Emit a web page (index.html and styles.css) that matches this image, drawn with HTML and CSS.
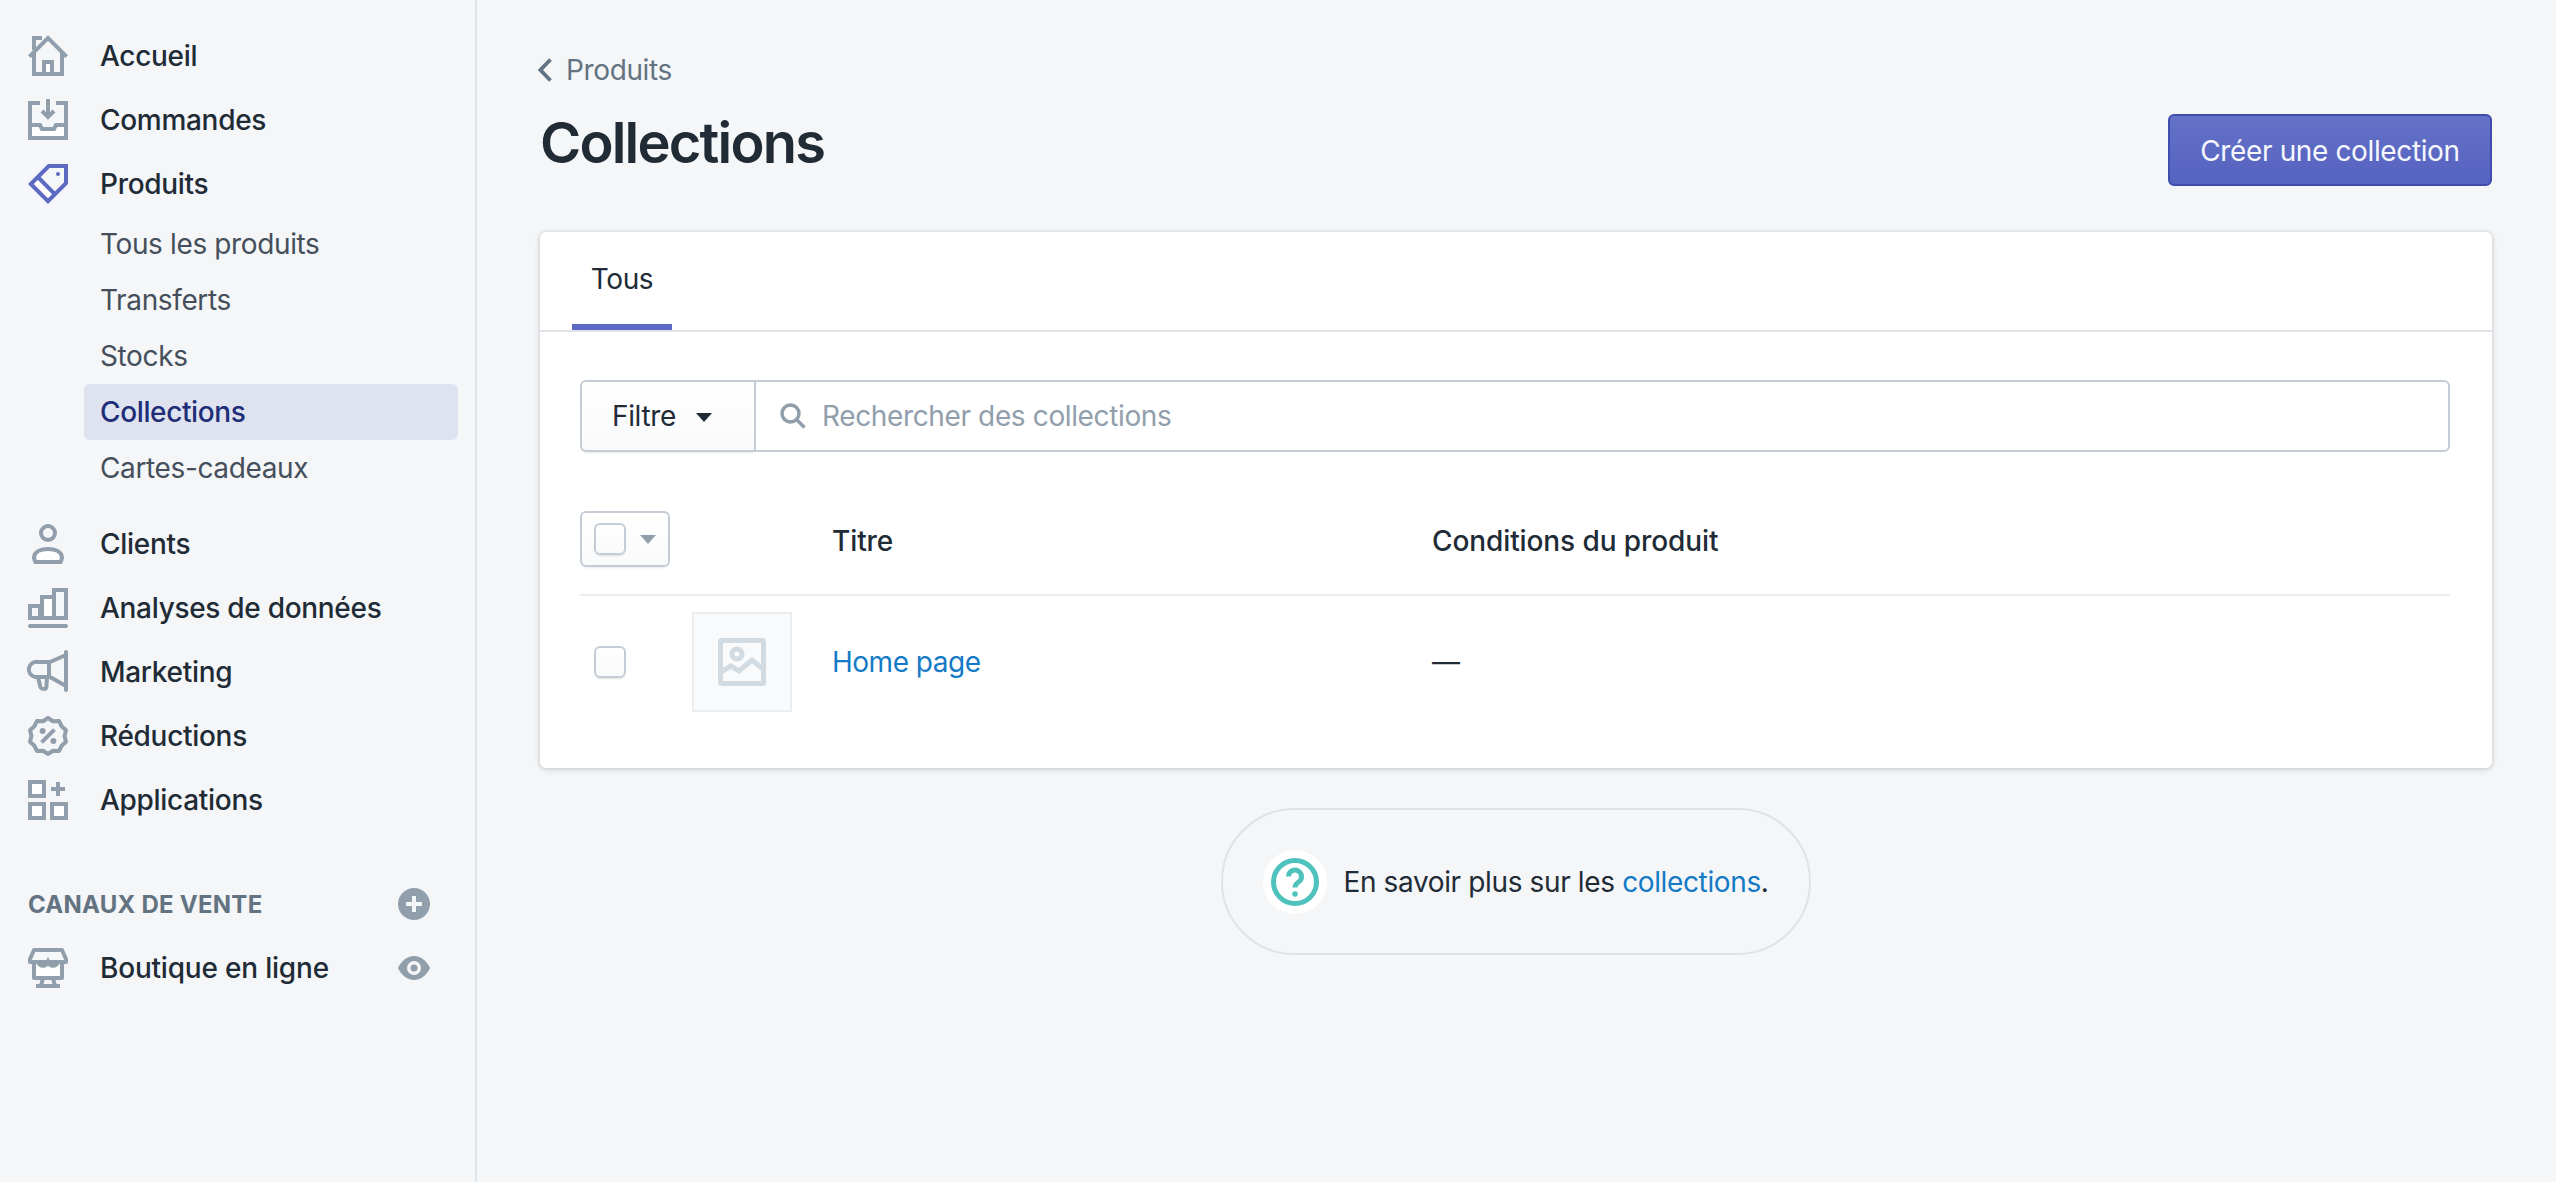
FILE: index.html
```html
<!DOCTYPE html>
<html lang="fr">
<head>
<meta charset="utf-8">
<title>Collections</title>
<link rel="stylesheet" href="styles.css">
</head>
<body>
<div class="app">
  <nav class="sidebar">
    <ul class="nav">
      <li class="nav-item">
        <svg class="ico" viewBox="0 0 20 20"><path class="wf" d="M8 19v-6h4v6z"/><path d="M3 8.500V19h14V8.500M.7 10.300 10 1l9.300 9.300M3 7V1h4M8 19v-6h4v6"/></svg>
        <span>Accueil</span>
      </li>
      <li class="nav-item">
        <svg class="ico" viewBox="0 0 20 20"><path class="wf" d="M2 13.500h3.500l1 2h7l1-2H18V18H2z"/><path d="M6 1.500H1V19h18V1.500h-5M1 12.500h5l1 2h6l1-2h5"/><path d="M10 -.5v8.500M7 5.500l3 3 3-3"/></svg>
        <span>Commandes</span>
      </li>
      <li class="nav-item">
        <svg class="ico ico-active" viewBox="0 0 20 20"><path class="wf" d="M2.500 10 5 7.500l7.500 7.500-2.500 2.500z"/><path d="M10.400 1H19v8.600l-9 9L1.400 10z"/><path d="m4.900 6.500 8.600 8.700"/><circle class="dot" cx="15" cy="5" r="1"/></svg>
        <span>Produits</span>
      </li>
    </ul>
    <ul class="subnav">
      <li class="sub-item">Tous les produits</li>
      <li class="sub-item">Transferts</li>
      <li class="sub-item">Stocks</li>
      <li class="sub-item sub-active">Collections</li>
      <li class="sub-item">Cartes-cadeaux</li>
    </ul>
    <ul class="nav nav-second">
      <li class="nav-item">
        <svg class="ico" viewBox="0 0 20 20"><circle cx="10" cy="4.500" r="3.500"/><path class="w" stroke-linejoin="round" d="M3 17c0-3 3-4.500 7-4.500s7 1.500 7 4.500l-.7 2H3.700z"/></svg>
        <span>Clients</span>
      </li>
      <li class="nav-item">
        <svg class="ico" viewBox="0 0 20 20"><path d="M1 15V9h5v6zM13 15V1h6v14z"/><path class="w" d="M7 15V4.500h6V15z"/><path d="M1 15h18"/><path d="M1 19h18" stroke-linecap="round"/></svg>
        <span>Analyses de données</span>
      </li>
      <li class="nav-item">
        <svg class="ico" viewBox="0 0 20 20"><path stroke-linejoin="round" stroke-linecap="round" d="M19 0v19M19 1.500 11 5H5a3.800 3.800 0 0 0-1.500 7.500H11l8 4.500M10.500 5v7.500M5 12.500l1.200 5c.3 1 2.800 1.500 3 0l.3-5"/></svg>
        <span>Marketing</span>
      </li>
      <li class="nav-item">
        <svg class="ico" viewBox="0 0 20 20"><path stroke-linejoin="round" d="M10 1l2.500 1.600 3-.1 1.300 2.600 2.200 2-.7 2.900.7 2.900-2.200 2-1.300 2.600-3-.1L10 19l-2.500-1.600-3 .1-1.300-2.600-2.200-2 .7-2.900L1 7.100l2.200-2 1.300-2.600 3 .1z"/><path d="M6.800 13.200l6.400-6.400"/><circle class="dot" cx="7.300" cy="7.500" r="1.500"/><circle class="dot" cx="12.700" cy="12.500" r="1.500"/></svg>
        <span>Réductions</span>
      </li>
      <li class="nav-item">
        <svg class="ico" viewBox="0 0 20 20"><path class="w" d="M1 1h7v7H1zM1 12h7v7H1zM12 12h7v7h-7z"/><path d="M15 1v7M11.500 4.500h7"/></svg>
        <span>Applications</span>
      </li>
    </ul>
    <div class="section-head">
      <span class="section-title">CANAUX DE VENTE</span>
      <svg class="side-ico" viewBox="0 0 32 32"><circle class="solid" cx="16" cy="16" r="16"/><path class="cut" d="M16 8v16M8 16h16"/></svg>
    </div>
    <div class="nav-item channel">
      <svg class="ico" viewBox="0 0 20 20"><path class="wf" d="M4 7v8h12V7z"/><path stroke-linejoin="round" d="M3 1h14l2 4.500v1.500H1V5.500zM3 7v8h14V7M4 19h12M7.500 15l-1 4M12.500 15l1 4"/><path d="M5 7c1 2.500 4 2.500 5 0 1 2.500 4 2.500 5 0"/></svg>
      <span class="channel-name">Boutique en ligne</span>
      <svg class="side-ico" viewBox="0 0 32 32"><path class="solid" d="M16 4C9 4 3 9.500 0 16c3 6.500 9 12 16 12s13-5.500 16-12C29 9.500 23 4 16 4z"/><circle class="hole" cx="16" cy="16" r="7"/><circle class="solid" cx="16" cy="16" r="3.500"/></svg>
    </div>
  </nav>

  <main class="main">
    <a class="back">
      <svg class="back-ico" viewBox="0 0 14 24"><path d="M12.500 1.500 2.500 12l10 10.500"/></svg>
      <span>Produits</span>
    </a>
    <header class="title-bar">
      <h1 class="title">Collections</h1>
      <button class="primary">Créer une collection</button>
    </header>

    <section class="card">
      <div class="tabs">
        <div class="tab">Tous</div>
      </div>
      <div class="filters">
        <button class="filter-btn">Filtre <i class="caret caret-dark"></i></button>
        <div class="search">
          <svg class="search-ico" viewBox="0 0 26 26"><circle cx="10.500" cy="10.500" r="8.500"/><path d="m16.500 16.500 8 8"/></svg>
          <span class="placeholder">Rechercher des collections</span>
        </div>
      </div>
      <div class="row row-head">
        <div class="cell-check">
          <div class="bulk"><span class="checkbox"></span><i class="caret caret-grey"></i></div>
        </div>
        <div></div>
        <div class="col-title">Titre</div>
        <div class="col-title">Conditions du produit</div>
      </div>
      <div class="row row-body">
        <div class="cell-check cell-inset"><span class="checkbox"></span></div>
        <div class="thumb">
          <svg class="thumb-ico" viewBox="0 0 48 48"><rect x="2.500" y="2.500" width="43" height="43" rx="1"/><circle cx="19" cy="16" r="5"/><path d="M3 34 13 28l8 5 13-11 11 9"/></svg>
        </div>
        <a class="link link-row">Home page</a>
        <div class="dash">—</div>
      </div>
    </section>

    <div class="help-wrap">
      <div class="help">
        <span class="help-bubble">
          <svg class="help-ico" viewBox="0 0 48 48"><circle cx="24" cy="24" r="21.500"/><path d="M17.500 18.500a6.500 6.500 0 1 1 10 5.500c-2.500 1.700-3.500 3-3.500 5.500"/><circle class="dot-teal" cx="24" cy="36" r="2.800"/></svg>
        </span>
        <p class="help-text">En savoir plus sur les <a class="link">collections</a>.</p>
      </div>
    </div>
  </main>
</div>
</body>
</html>
```

FILE: styles.css
```css
* { box-sizing: border-box; }
html, body { margin: 0; height: 100%; }
body {
  background: #f4f6f8;
  color: #212b36;
  font-family: Inter, "Liberation Sans", sans-serif;
  font-size: 28px;
  letter-spacing: -.37px;
  overflow: hidden;
}
ul { list-style: none; margin: 0; padding: 0; }
button { letter-spacing: inherit; }

.app { display: flex; height: 1182px; }

/* Sidebar */
.sidebar {
  width: 477px;
  flex: none;
  border-right: 2px solid #dfe3e8;
  padding-top: 24px;
}
.nav-item {
  height: 64px;
  display: flex;
  align-items: center;
  gap: 32px;
  padding-left: 28px;
  font-weight: 450;
  color: #212b36;
  letter-spacing: -.3px;
}
.ico {
  width: 40px;
  height: 40px;
  flex: none;
  fill: none;
  stroke: #919eab;
  stroke-width: 2;
  overflow: visible;
}
.ico .w { fill: #fff; }
.ico .wf { fill: #fff; stroke: none; }
.ico .dot { fill: #919eab; stroke: none; }
.ico-active { stroke: #5c6ac4; }
.ico-active .dot { fill: #5c6ac4; }
.sub-item {
  height: 56px;
  line-height: 56px;
  margin: 0 17px 0 84px;
  padding-left: 16px;
  color: #454f5b;
  border-radius: 6px;
}
.sub-active {
  background: #dfe3ef;
  color: #202e78;
  font-weight: 550;
}
.nav-second { margin-top: 16px; }
.section-head {
  margin-top: 40px;
  height: 64px;
  display: flex;
  align-items: center;
  justify-content: space-between;
  padding: 0 45px 0 28px;
}
.section-title {
  font-size: 24px;
  font-weight: 650;
  color: #637381;
  letter-spacing: .25px;
}
.side-ico { width: 32px; height: 32px; flex: none; }
.solid { fill: #919eab; }
.hole { fill: #f4f6f8; }
.cut { stroke: #f4f6f8; stroke-width: 4; fill: none; }
.channel { padding-right: 45px; }
.channel-name { flex: 1; letter-spacing: -.2px; }

/* Main */
.main {
  flex: 1;
  min-width: 0;
  padding: 50px 64px 0 63px;
}
.back {
  height: 40px;
  display: flex;
  align-items: center;
  gap: 14px;
  color: #637381;
}
.back-ico {
  width: 14px;
  height: 24px;
  margin-left: -2px;
  fill: none;
  stroke: #637381;
  stroke-width: 3.8;
}
.title-bar {
  margin-top: 17px;
  height: 79px;
  display: flex;
  justify-content: space-between;
  align-items: flex-start;
}
.title {
  margin: 0;
  font-size: 56px;
  line-height: 72px;
  font-weight: 600;
  letter-spacing: -1.8px;
}
.primary {
  margin-top: 7px;
  width: 324px;
  height: 72px;
  border: 2px solid #3f4eae;
  border-radius: 6px;
  background: linear-gradient(180deg, #6371c7, #5563c1);
  color: #f6f7fc;
  font: 400 28px Inter, "Liberation Sans", sans-serif;
  padding: 2px 0 0;
}

.card {
  margin-top: 46px;
  height: 536px;
  background: #fff;
  border-radius: 6px;
  box-shadow: 0 0 0 2px rgba(63, 63, 68, .05), 0 2px 6px rgba(63, 63, 68, .15);
}
.tabs {
  height: 100px;
  border-bottom: 2px solid #dfe3e8;
  padding-left: 32px;
}
.tab {
  width: 100px;
  height: 98px;
  border-bottom: 6px solid #5c6ac4;
  text-align: center;
  line-height: 94px;
}
.filters {
  margin: 48px 42px 0 40px;
  height: 72px;
  display: flex;
}
.filter-btn {
  width: 176px;
  height: 72px;
  display: flex;
  align-items: center;
  gap: 20px;
  padding: 0 0 0 30px;
  border: 2px solid #c4cdd5;
  border-radius: 6px 0 0 6px;
  background: linear-gradient(180deg, #fff, #f9fafb);
  box-shadow: 0 2px 2px -1px rgba(63, 63, 68, .1);
  color: #212b36;
  font: 400 28px Inter, "Liberation Sans", sans-serif;
}
.caret {
  display: block;
  width: 0;
  height: 0;
  border-style: solid;
  border-width: 9px 8px 0;
  border-color: transparent;
}
.caret-dark { border-top-color: #212b36; margin-top: 3px; }
.caret-grey { border-top-color: #919eab; }
.search {
  flex: 1;
  height: 72px;
  margin-left: -2px;
  display: flex;
  align-items: center;
  gap: 16px;
  padding-left: 24px;
  border: 2px solid #c4cdd5;
  border-radius: 0 6px 6px 0;
}
.search-ico {
  width: 26px;
  height: 26px;
  fill: none;
  stroke: #919eab;
  stroke-width: 3.500;
}
.placeholder { color: #919eab; }

.row {
  display: grid;
  grid-template-columns: 112px 140px 600px 1fr;
  margin: 0 42px 0 40px;
  align-items: center;
}
.row-head {
  margin-top: 46px;
  height: 98px;
  padding-bottom: 14px;
  border-bottom: 2px solid #ebeef0;
}
.row-body { height: 136px; padding-top: 16px; padding-bottom: 20px; }
.cell-check { display: flex; align-items: center; }
.cell-inset { padding-left: 14px; }
.bulk {
  width: 90px;
  height: 56px;
  display: flex;
  align-items: center;
  gap: 14px;
  padding-left: 12px;
  border: 2px solid #c4cdd5;
  border-radius: 6px;
  background: linear-gradient(180deg, #fff, #f9fafb);
  box-shadow: 0 2px 2px -1px rgba(63, 63, 68, .1);
}
.checkbox {
  display: block;
  width: 32px;
  height: 32px;
  flex: none;
  border: 2px solid #c4cdd5;
  border-radius: 6px;
  background: linear-gradient(180deg, #fff, #f9fafb);
  box-shadow: 0 2px 2px -1px rgba(63, 63, 68, .15);
}
.col-title { font-weight: 450; color: #212b36; padding-top: 4px; letter-spacing: -.1px; }
.thumb {
  width: 100px;
  height: 100px;
  display: flex;
  align-items: center;
  justify-content: center;
  background: #f9fafb;
  border: 2px solid #ebeef0;
}
.thumb-ico {
  width: 48px;
  height: 48px;
  fill: none;
  stroke: #d3dbe2;
  stroke-width: 5;
}
.link { color: #147ac6; }
.link-row { letter-spacing: -.5px; }
.dash { color: #212b36; }

.help-wrap {
  margin-top: 40px;
  display: flex;
  justify-content: center;
}
.help {
  height: 147px;
  display: flex;
  align-items: center;
  gap: 16px;
  padding: 0 40px;
  border: 2px solid #dfe3e8;
  border-radius: 74px;
}
.help-bubble {
  width: 64px;
  height: 64px;
  display: flex;
  align-items: center;
  justify-content: center;
  background: #fff;
  border-radius: 50%;
}
.help-ico {
  width: 48px;
  height: 48px;
  fill: none;
  stroke: #50c2bd;
  stroke-width: 5;
}
.dot-teal { fill: #50c2bd; stroke: none; }
.help-text { margin: 0; }
```
